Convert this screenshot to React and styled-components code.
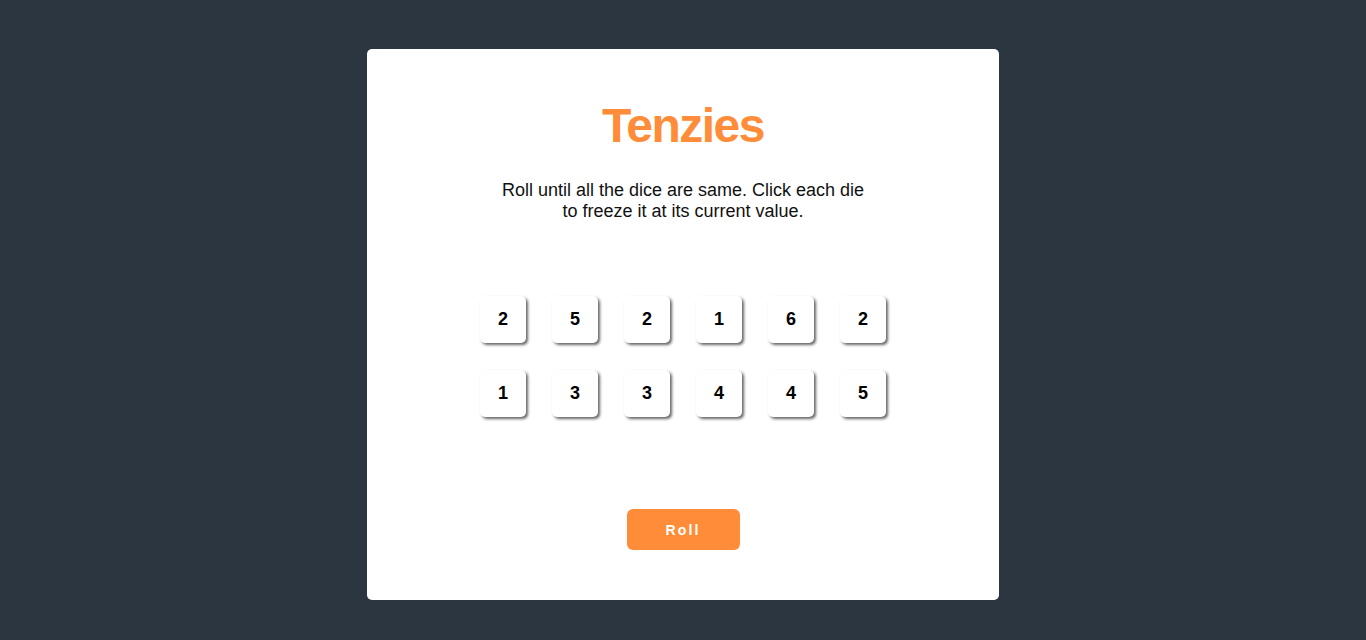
import React, { useState } from "react";
import styled, { createGlobalStyle } from "styled-components";

const GlobalStyle = createGlobalStyle`
  * {
    box-sizing: border-box;
  }
  body {
    margin: 0;
    background-color: #2b3640;
    font-family: "Liberation Sans", Arial, sans-serif;
  }
`;

const Page = styled.div`
  display: flex;
  justify-content: center;
  padding-top: 49px;
  min-height: 640px;
`;

const Card = styled.main`
  width: 632px;
  height: 551px;
  background-color: #ffffff;
  border-radius: 5px;
  display: flex;
  flex-direction: column;
  align-items: center;
  padding-top: 49px;
`;

const Title = styled.h1`
  margin: 0;
  font-size: 48px;
  line-height: 55px;
  font-weight: 700;
  letter-spacing: -1.5px;
  color: #ff8c38;
`;

const Instructions = styled.p`
  margin: 27px 0 0;
  width: 380px;
  font-size: 18px;
  line-height: 21px;
  text-align: center;
  color: #111111;
`;

const DiceGrid = styled.div`
  display: grid;
  grid-template-columns: repeat(6, 46px);
  grid-auto-rows: 47px;
  column-gap: 26px;
  row-gap: 27px;
  margin-top: 74px;
`;

const Die = styled.button`
  border: none;
  border-radius: 5px;
  background-color: ${(props) => (props.$held ? "#59e391" : "#ffffff")};
  box-shadow: 2px 2px 3px rgba(0, 0, 0, 0.6);
  font-family: inherit;
  font-size: 18px;
  font-weight: 700;
  color: #000000;
  cursor: pointer;
  padding: 0;
`;

const RollButton = styled.button`
  margin-top: 92px;
  width: 113px;
  height: 41px;
  border: none;
  border-radius: 6px;
  background-color: #ff8c38;
  color: #ffffff;
  font-family: inherit;
  font-size: 14px;
  font-weight: 900;
  letter-spacing: 2.2px;
  cursor: pointer;
`;

const startingDice = [2, 5, 2, 1, 6, 2, 1, 3, 3, 4, 4, 5];

const App = () => {
  const [dice, setDice] = useState(
    startingDice.map((value, i) => ({ id: i, value, held: false }))
  );

  const holdDie = (id) => {
    setDice(dice.map((d) => (d.id === id ? { ...d, held: !d.held } : d)));
  };

  const rollDice = () => {
    setDice(
      dice.map((d) =>
        d.held ? d : { ...d, value: Math.ceil(Math.random() * 6) }
      )
    );
  };

  return (
    <>
      <GlobalStyle />
      <Page>
        <Card>
          <Title>Tenzies</Title>
          <Instructions>
            Roll until all the dice are same. Click each die to freeze it at
            its current value.
          </Instructions>
          <DiceGrid>
            {dice.map((d) => (
              <Die key={d.id} $held={d.held} onClick={() => holdDie(d.id)}>
                {d.value}
              </Die>
            ))}
          </DiceGrid>
          <RollButton onClick={rollDice}>Roll</RollButton>
        </Card>
      </Page>
    </>
  );
};

export default App;
